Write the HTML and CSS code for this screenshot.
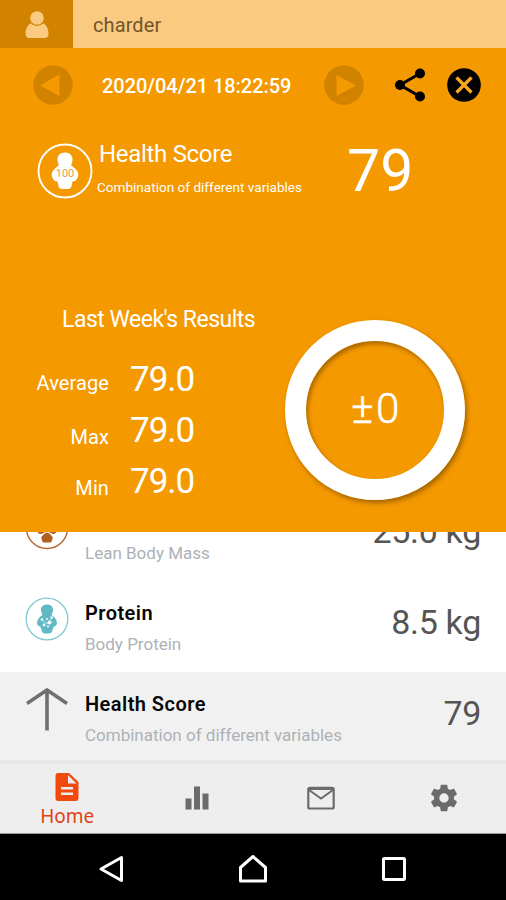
FILE: index.html
```html
<!DOCTYPE html>
<html lang="en">
<head>
<meta charset="utf-8">
<meta name="viewport" content="width=device-width, initial-scale=1">
<title>Health Score</title>
<link rel="stylesheet" href="styles.css">
</head>
<body>
<div class="app">
  <header class="user">
    <div class="avatar">
      <svg width="24" height="28" viewBox="0 0 24 28"><circle cx="12" cy="7" r="6.8"/><path d="M5.6 12.2Q12 18 18.4 12.2Q23 15 23.5 22Q23.700 27 19.500 27H4.500Q.3 27 .5 22Q1 15 5.600 12.200Z"/></svg>
    </div>
    <span class="name">charder</span>
  </header>

  <section class="panel">
    <div class="toolbar">
      <svg class="round" viewBox="0 0 40 40"><circle cx="20" cy="20" r="19.800"/><path d="M7 20.500 26.500 9.500V31Z"/></svg>
      <time class="date">2020/04/21 18:22:59</time>
      <svg class="round" viewBox="0 0 40 40"><circle cx="20" cy="20" r="19.800"/><path d="M32 20.500 12.500 10V31Z"/></svg>
      <svg class="share" viewBox="0 0 32 34"><path d="M26 5.500 6 17 26 28.500" fill="none" stroke="#000" stroke-width="3"/><circle cx="26" cy="5.500" r="5"/><circle cx="6" cy="17" r="5"/><circle cx="26" cy="28.500" r="5"/></svg>
      <svg class="close" viewBox="0 0 34 34"><circle cx="17" cy="17" r="16.800"/><path d="m9.500 9.500 15 15m0-15-15 15" stroke="#fba81c" stroke-width="3.200"/></svg>
    </div>

    <div class="score">
      <div class="score-icon">
        <svg viewBox="0 0 56 56"><circle cx="28" cy="28" r="26.500" fill="none" stroke="#fff" stroke-width="1.900"/><path fill="#fff" d="M28 9.500C33 9.500 36 13 35.500 17.500Q35.300 20 34 22Q36 23.500 38 25.500Q43 30 40.500 35Q38.800 38.500 35.500 38.500L34.500 43Q34 46 31 46H25Q22 46 21.500 43L20.500 38.500Q17 38.500 15.500 35Q13 30 18 25.500Q20 23.500 22 22Q20.700 20 20.500 17.500C20 13 23 9.500 28 9.500Z"/></svg>
        <span class="hundred">100</span>
      </div>
      <div class="score-text">
        <h1>Health Score</h1>
        <p>Combination of different variables</p>
      </div>
      <div class="score-value">79</div>
    </div>

    <div class="week">
      <div class="week-data">
        <h2>Last Week's Results</h2>
        <dl>
          <dt>Average</dt><dd>79.0</dd>
          <dt class="low">Max</dt><dd>79.0</dd>
          <dt class="low">Min</dt><dd>79.0</dd>
        </dl>
      </div>
      <div class="ring"><span>±0</span></div>
    </div>
  </section>

  <main class="list">
    <article class="row">
      <svg class="badge" viewBox="0 0 44 44"><circle cx="22" cy="22" r="20.500" fill="none" stroke="#b5652f" stroke-width="1.400"/><path fill="#b0601f" d="M22 7C27 7 28 12 26.500 16Q34 20 32 25Q30.500 29 26.500 27.500L22 25 17.500 27.500Q13.500 29 12 25Q10 20 17.500 16C16 12 17 7 22 7Z"/><path fill="#b0601f" d="M22 26.500Q25 27 27.800 31.500L26.800 35Q26.500 36.500 25 36.500H19Q17.500 36.500 17.200 35L16.200 31.500Q19 27 22 26.500Z"/></svg>
      <div class="label"><h3>Lean Mass</h3><p>Lean Body Mass</p></div>
      <div class="value">25.0 kg</div>
    </article>
    <article class="row">
      <svg class="badge" viewBox="0 0 44 44"><circle cx="22" cy="22" r="20.800" fill="none" stroke="#7fc8d0" stroke-width="1.300"/><path fill="#62b9c5" d="M22 7.500C26 7.500 28.300 10 28 13.500Q27.800 15.500 26.500 18Q28.500 19 30 21Q33.500 26 31 28.500L28.500 30 27 34.500Q26.500 36.500 24 36.500H20Q17.500 36.500 17 34.500L15.500 30 13 28.500Q10.500 26 14 21Q15.500 19 17.500 18Q16.200 15.500 16 13.500C15.700 10 18 7.500 22 7.500Z"/><path d="m17 23 5 4 5-6" fill="none" stroke="#b9e6e9"/><g fill="#f1fcfc"><circle cx="17" cy="22.500" r="1.300"/><circle cx="22" cy="22" r="1"/><circle cx="24.500" cy="25.500" r="2"/><circle cx="26.700" cy="20.500" r="1.300"/><circle cx="19" cy="28" r="1.400"/><circle cx="23" cy="29.500" r="1.100"/></g></svg>
      <div class="label"><h3>Protein</h3><p>Body Protein</p></div>
      <div class="value">8.5 kg</div>
    </article>
    <article class="row active">
      <svg class="badge" viewBox="0 0 44 44"><path d="M22 1.500V42.500M2 15.500 22 2 42 15.500" fill="none" stroke="#707070" stroke-width="3.600"/></svg>
      <div class="label"><h3>Health Score</h3><p>Combination of different variables</p></div>
      <div class="value">79</div>
    </article>
  </main>

  <nav class="tabs">
    <a class="tab home">
      <svg width="24" height="28" viewBox="0 0 24 28"><path fill="#f04a0c" fill-rule="evenodd" d="M3 0H14L23.500 9V25Q23.500 28 20.500 28H3Q.5 28 .5 25V3Q.5 0 3 0ZM13 2V10.500H21.500ZM6 14V16.500H18V14ZM6 19.500V22H18V19.500Z"/></svg>
      <span>Home</span>
    </a>
    <a class="tab"><svg width="24" height="24" viewBox="0 0 24 24"><path fill="#6b6b6b" d="M.5 12.500h6V23.500h-6ZM9 .5h6v23H9ZM17.500 7.500h6v16h-6Z"/></svg></a>
    <a class="tab"><svg width="28" height="24" viewBox="0 0 28 24"><rect x="1.300" y="1.800" width="25.400" height="20.700" rx="1.500" fill="none" stroke="#6b6b6b" stroke-width="2.200"/><path d="m2 4 12 8.500L26 4M2 3h24" fill="none" stroke="#6b6b6b" stroke-width="2"/></svg></a>
    <a class="tab"><svg width="32" height="32" viewBox="0 0 24 24"><path fill="#6b6b6b" d="M19.430 12.980c.040-.320.070-.640.070-.980s-.030-.660-.070-.980l2.110-1.650c.190-.150.240-.420.120-.640l-2-3.460c-.120-.220-.390-.300-.610-.220l-2.490 1c-.520-.400-1.080-.730-1.690-.980l-.380-2.650A.488.488 0 0 0 14 2h-4c-.250 0-.460.180-.490.420l-.380 2.650c-.610.250-1.170.590-1.690.980l-2.490-1c-.230-.090-.490 0-.610.220l-2 3.460c-.130.220-.070.490.120.640l2.110 1.650c-.040.320-.070.650-.070.980s.030.660.070.980l-2.110 1.650c-.190.150-.240.420-.120.640l2 3.460c.120.220.390.300.610.220l2.490-1c.520.400 1.080.730 1.690.980l.380 2.650c.030.240.240.420.490.420h4c.250 0 .460-.180.490-.420l.380-2.650c.610-.250 1.170-.590 1.690-.980l2.490 1c.230.090.490 0 .610-.220l2-3.460c.120-.220.070-.490-.120-.640l-2.110-1.650ZM12 15.500a3.500 3.500 0 1 1 0-7 3.500 3.500 0 0 1 0 7Z"/></svg></a>
  </nav>

  <footer class="system">
    <svg viewBox="0 0 28 30"><path d="M3 15 23.500 3.500V26.500Z"/></svg>
    <svg viewBox="0 0 28 30"><path d="M14 2.500 1.500 13.500V27H26.500V13.500Z"/></svg>
    <svg viewBox="0 0 28 30"><rect x="3.500" y="4.500" width="21" height="21" rx="1"/></svg>
  </footer>
</div>
</body>
</html>
```
FILE: styles.css
```css
* { box-sizing: border-box; margin: 0; padding: 0; }
body { font-family: Roboto, sans-serif; font-weight: 400; background: #fff; }
svg { display: block; flex: none; }
h1, h2, h3 { font-weight: 400; }
.app { width: 506px; height: 900px; display: flex; flex-direction: column; overflow: hidden; }

.user { height: 48px; flex: none; display: flex; background: #f9ca80; }
.avatar { width: 73px; background: #d18300; display: flex; justify-content: center; padding-top: 11px; }
.avatar svg { fill: #f9ca80; }
.name { padding-left: 20px; font-size: 20px; line-height: 50px; letter-spacing: .1px; color: #72552c; }

.panel { height: 484px; flex: none; background: #f59900; color: #fff; }
.toolbar { height: 74px; display: flex; align-items: center; padding-left: 33px; }
.round { width: 40px; height: 40px; fill: #d18300; }
.round path { fill: #f59900; }
.date { width: 251px; padding: 2px 0 0 29px; font-size: 20px; font-weight: 500; letter-spacing: -.05px; white-space: nowrap; }
.share { width: 32px; height: 34px; margin-left: 30px; }
.close { width: 34px; height: 34px; margin-left: 21px; }

.score { height: 86px; display: flex; padding-left: 37px; padding-top: 14px; }
.score-icon { position: relative; width: 56px; height: 56px; margin-top: 7px; }
.hundred { position: absolute; inset: 24px 0 auto; text-align: center; font-size: 11px; line-height: 13px; color: #e5a047; }
.score-text { width: 254px; padding-left: 4px; white-space: nowrap; }
.score-text h1 { padding-left: 2px; font-size: 24px; line-height: 36px; letter-spacing: -.3px; }
.score-text p { font-size: 13.500px; line-height: 31px; letter-spacing: .03px; }
.score-value { font-size: 59px; line-height: 70px; }

.week { display: flex; padding-top: 92px; }
.week-data { width: 285px; }
.week h2 { padding-left: 62px; font-size: 23px; line-height: 40px; letter-spacing: -.5px; white-space: nowrap; }
.week dl { display: grid; grid-template-columns: 109px 1fr; grid-auto-rows: 51px; column-gap: 21px; margin-top: 13px; }
.week dt { text-align: right; font-size: 20px; line-height: 61px; letter-spacing: .1px; }
.week .low { line-height: 66px; }
.week dd { font-size: 35px; line-height: 53px; letter-spacing: -1px; }
.ring { width: 180px; height: 180px; margin-top: 20px; border: 21px solid #fff; border-radius: 50%; box-shadow: 2px 3px 5px #7b4d00b0, inset 2px 3px 4px #7b4d00a0; display: flex; align-items: center; justify-content: center; }
.ring span { padding: 0 0 3px 3px; font-size: 42px; font-weight: 300; line-height: 50px; letter-spacing: 2.500px; -webkit-text-stroke: .5px #fff; }

.list { height: 228px; flex: none; display: flex; flex-direction: column; justify-content: flex-end; overflow: hidden; }
.row { height: 91px; flex: none; display: flex; padding: 0 25px; }
.row:last-child { height: 88px; }
.active { background: #f1f1f1; }
.badge { width: 44px; height: 44px; margin-top: 16px; }
.label { padding: 16px 0 0 16px; white-space: nowrap; }
.label h3 { font-size: 20px; line-height: 32px; font-weight: 600; letter-spacing: .45px; color: #080808; }
.label p { font-size: 17px; line-height: 31px; color: #adb1b7; }
.value { margin-left: auto; padding-top: 22px; font-size: 34px; line-height: 38px; letter-spacing: -.3px; color: #555; white-space: nowrap; }

.tabs { height: 74px; flex: none; display: flex; background: #eee; border-top: 4px solid #e7e7e7; border-bottom: 1px solid #999; padding-left: 5px; }
.tab { width: 124px; display: flex; flex-direction: column; align-items: center; justify-content: center; padding-bottom: 2px; }
.home { width: 125px; margin-right: 6px; justify-content: flex-start; padding-top: 9px; }
.home span { font-family: "Noto Sans", sans-serif; font-size: 19px; line-height: 30px; color: #e04213; }

.system { flex: 1; background: #000; display: flex; align-items: center; justify-content: center; gap: 113px; padding-top: 4px; }
.system svg { width: 28px; height: 30px; fill: none; stroke: #fff; stroke-width: 3; stroke-linejoin: round; }
```
